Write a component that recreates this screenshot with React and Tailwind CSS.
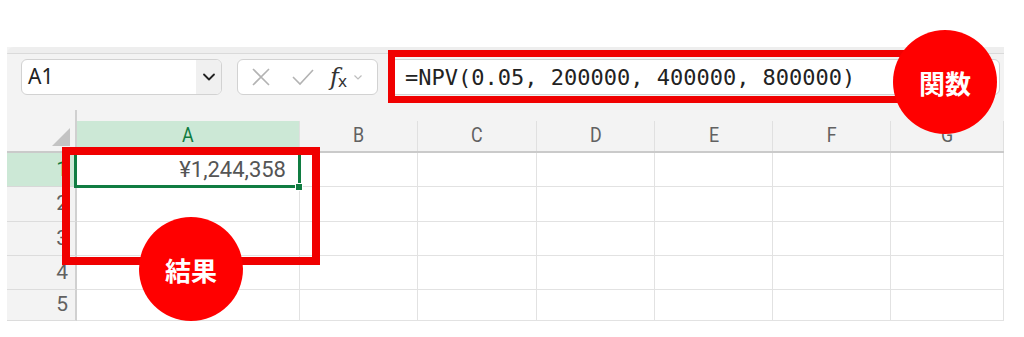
import { ChevronDown } from 'lucide-react'

const cols = [
  { k: 'A', w: 'w-[223px]', sel: true },
  { k: 'B', w: 'w-[118px]' },
  { k: 'C', w: 'w-[119px]' },
  { k: 'D', w: 'w-[118px]' },
  { k: 'E', w: 'w-[118px]' },
  { k: 'F', w: 'w-[118px]' },
  { k: 'G', w: 'flex-1' },
]

const rows = [
  { n: 1, h: 'h-[34px]' },
  { n: 2, h: 'h-[35px]' },
  { n: 3, h: 'h-[34px]' },
  { n: 4, h: 'h-[34px]' },
  { n: 5, h: 'h-[31px]' },
]

function Badge({ label, className }) {
  return (
    <div
      className={`absolute w-[104px] h-[104px] rounded-full bg-[#ff0000] flex items-center justify-center text-white text-[26px] font-bold font-['Noto_Sans_CJK_JP',sans-serif] ${className}`}
    >
      {label}
    </div>
  )
}

export default function App() {
  return (
    <div className="relative w-[1024px] h-[337px] bg-white overflow-hidden font-['Roboto',sans-serif]">
      <div className="h-[47px]" />

      <div className="mx-[7px] w-[997px] h-[274px] bg-[#f3f3f3] flex flex-col">
        {/* ribbon edge */}
        <div className="h-[7px] bg-[#eeeeee] border-b border-[#dadada] rounded-tl-[10px]" />

        {/* formula bar */}
        <div className="flex items-center pt-[5px] pb-[15px] pl-[14px] pr-[4px]">
          <div className="w-[201px] h-[36px] bg-white border border-[#d2d2d2] rounded-[6px] flex overflow-hidden">
            <div className="flex-1 flex items-center pl-[6px] text-[21px] text-[#222] font-['Noto_Sans',sans-serif]">A1</div>
            <div className="w-[25px] bg-[#f0f0f0] flex items-center justify-center text-[#222]">
              <ChevronDown size={20} strokeWidth={2.2} />
            </div>
          </div>

          <div className="ml-[15px] w-[141px] h-[36px] bg-white border border-[#d2d2d2] rounded-[6px] flex items-center pl-[13px]">
            <svg width="20" height="20" viewBox="0 0 20 20" className="text-[#b3b3b3]">
              <path d="M2 2 L18 18 M18 2 L2 18" stroke="currentColor" strokeWidth="1.6" fill="none" />
            </svg>
            <svg width="24" height="20" viewBox="0 0 24 20" className="ml-[20px] text-[#b3b3b3]">
              <path d="M2 10 L9 17 L22 3" stroke="currentColor" strokeWidth="1.6" fill="none" />
            </svg>
            <span className="ml-[15px] flex items-end text-[#333] font-['DejaVu_Serif',serif] italic leading-none">
              <span className="text-[24px]">f</span>
              <span className="text-[17px] not-italic font-['Noto_Sans',sans-serif] -ml-[1px]">x</span>
            </span>
            <svg width="10" height="8" viewBox="0 0 10 8" className="ml-[6px] text-[#bdbdbd]">
              <path d="M1.5 2.5 L5 6 L8.5 2.5" stroke="currentColor" strokeWidth="1.2" fill="none" />
            </svg>
          </div>

          <div className="ml-[12px] flex-1 h-[36px] bg-white border border-[#d2d2d2] rounded-[6px] flex items-center pl-[14px] text-[22px] text-[#222] font-['DejaVu_Sans_Mono',monospace] whitespace-nowrap">
            =NPV(0.05, 200000, 400000, 800000)
          </div>
        </div>

        {/* sheet */}
        <div className="flex-1 flex flex-col">
          <div className="flex h-[43px] border-b-2 border-[#cacaca]">
            <div className="relative w-[70px] border-r-2 border-[#d0d0d0]">
              <svg width="18" height="18" viewBox="0 0 18 18" className="absolute right-[5px] bottom-[5px]">
                <path d="M18 0 L18 18 L0 18 Z" fill="#c3c3c3" />
              </svg>
            </div>
            {cols.map((c) => (
              <div key={c.k} className={`${c.w} flex flex-col justify-end`}>
                <div
                  className={`h-[30px] flex items-center justify-center border-r border-[#e0e0e0] ${
                    c.sel ? 'bg-[#cce8d6] text-[#107c41]' : 'text-[#616161]'
                  }`}
                >
                  <span className="inline-block text-[21px] scale-x-[0.85]">{c.k}</span>
                </div>
              </div>
            ))}
          </div>

          {rows.map((r) => (
            <div key={r.n} className={`flex ${r.h}`}>
              <div
                className={`w-[70px] border-r-2 border-[#d0d0d0] border-b flex items-center justify-end pr-[7px] text-[21px] ${
                  r.n === 1 ? 'bg-[#cce8d6] text-[#107c41] border-b-[#d8d8d8]' : 'text-[#616161] border-b-[#dcdcdc]'
                }`}
              >
                {r.n}
              </div>
              {cols.map((c) => (
                <div
                  key={c.k}
                  className={`${c.w} bg-white border-r border-b border-[#e2e2e2] flex items-center justify-end pr-[13px] text-[22px] text-[#555]`}
                >
                  {r.n === 1 && c.k === 'A' ? '¥1,244,358' : ''}
                </div>
              ))}
            </div>
          ))}
        </div>
      </div>

      {/* selected cell A1 */}
      <div className="absolute left-[74px] top-[151px] w-[227px] h-[37px] border-[3px] border-[#107c41]" />
      <div className="absolute left-[295px] top-[183px] w-[8px] h-[8px] bg-[#107c41] border border-white" />

      {/* annotations */}
      <div className="absolute left-[388px] top-[50px] w-[580px] h-[53px] border-[7px] border-[#f00000]" />
      <Badge label="関数" className="left-[893px] top-[30px]" />

      <div className="absolute left-[62px] top-[147px] w-[258px] h-[118px] border-[8px] border-[#f00000]" />
      <Badge label="結果" className="left-[139px] top-[217px]" />
    </div>
  )
}
